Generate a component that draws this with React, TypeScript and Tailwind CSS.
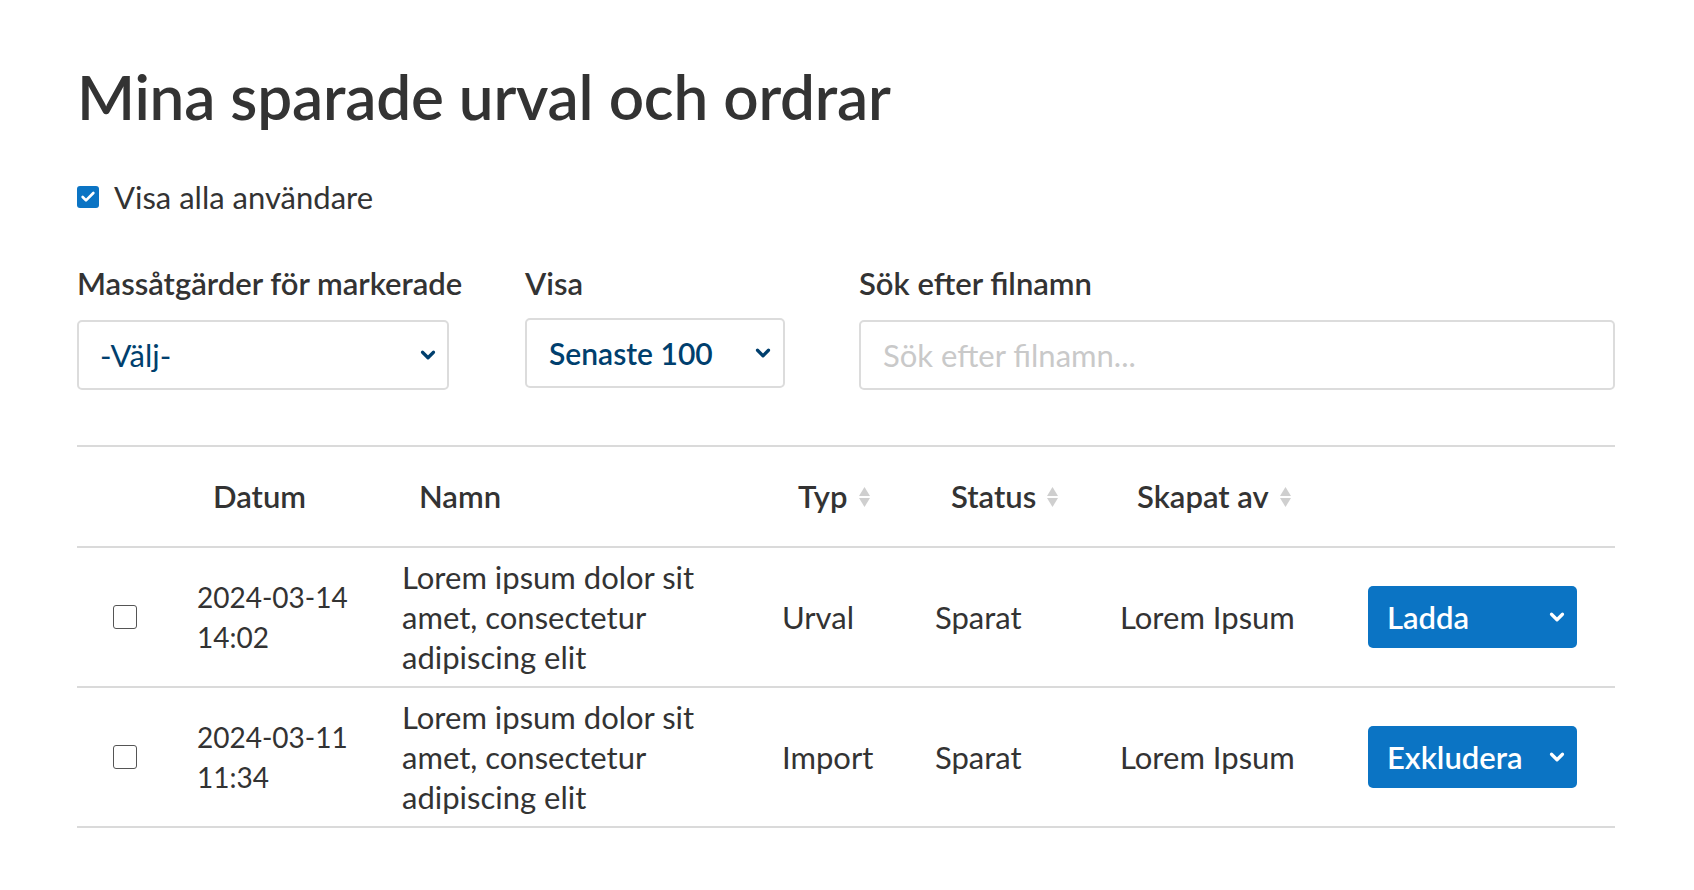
import { ChevronDown, Check } from 'lucide-react';

const rows = [
    { date: '2024-03-14', time: '14:02', type: 'Urval', status: 'Sparat', by: 'Lorem Ipsum', action: 'Ladda' },
    { date: '2024-03-11', time: '11:34', type: 'Import', status: 'Sparat', by: 'Lorem Ipsum', action: 'Exkludera' },
];

const cols = 'grid grid-cols-[120px_205px_380px_153px_185px_248px_1fr]';

function SortIcon() {
    return (
        <svg width="13" height="24" viewBox="0 0 13 24" className="ml-[10px] shrink-0">
            <path d="M6.5 2 L12 11 L1 11 Z" fill="#cfcfcf" />
            <path d="M6.5 22 L12 13 L1 13 Z" fill="#cfcfcf" />
        </svg>
    );
}

export default function App() {
    return (
        <div className="min-h-screen bg-white pl-[77px] pr-[79px] pt-[62px] text-[#333]" style={{ fontFamily: 'Lato, "Noto Sans", sans-serif' }}>
            <h1 className="text-[62px] font-semibold leading-[68px] tracking-[-0.2px]">Mina sparade urval och ordrar</h1>

            {/* visa alla */}
            <label className="mt-[50px] flex items-center gap-[15px]">
                <span className="flex h-[22px] w-[22px] items-center justify-center rounded-[3px] bg-[#0b74c4]">
                    <Check className="h-4 w-4 text-white" strokeWidth={4} />
                </span>
                <span className="text-[31px] leading-[34px]">Visa alla användare</span>
            </label>

            {/* filters */}
            <div className="mt-[52px] flex items-start">
                <div className="w-[372px]">
                    <div className="whitespace-nowrap text-[31px] font-semibold leading-[34px]">Massåtgärder för markerade</div>
                    <div className="mt-[20px] flex h-[70px] items-center justify-between rounded-[5px] border-2 border-[#dcdcdc] pl-[21px] pr-[8px] text-[31px] text-[#003f6e]">
                        <span>-Välj-</span>
                        <ChevronDown className="h-[22px] w-[22px]" strokeWidth={3.5} />
                    </div>
                </div>
                <div className="ml-[76px] w-[260px]">
                    <div className="text-[31px] font-semibold leading-[34px]">Visa</div>
                    <div className="mt-[18px] flex h-[70px] items-center justify-between rounded-[5px] border-2 border-[#dcdcdc] pl-[22px] pr-[9px] text-[30px] font-semibold text-[#003f6e]">
                        <span>Senaste 100</span>
                        <ChevronDown className="h-[22px] w-[22px]" strokeWidth={3.5} />
                    </div>
                </div>
                <div className="ml-[74px] flex-1">
                    <div className="text-[31px] font-semibold leading-[34px]">Sök efter filnamn</div>
                    <input
                        placeholder="Sök efter filnamn..."
                        className="mt-[20px] h-[70px] w-full rounded-[5px] border-2 border-[#dcdcdc] px-[22px] text-[31px] outline-none placeholder:text-[#c9c9c9]"
                    />
                </div>
            </div>

            {/* table */}
            <div className="mt-[55px] border-t-2 border-[#dadada]">
                <div className={`${cols} h-[101px] items-center border-b-2 border-[#dadada] text-[31px] font-semibold`}>
                    <div />
                    <div className="pl-[16px]">Datum</div>
                    <div className="pl-[17px]">Namn</div>
                    <div className="flex items-center pl-[16px]">Typ<SortIcon /></div>
                    <div className="flex items-center pl-[16px]">Status<SortIcon /></div>
                    <div className="flex items-center pl-[17px]">Skapat av<SortIcon /></div>
                    <div />
                </div>
                {rows.map((r) => (
                    <div key={r.date} className={`${cols} items-center border-b-2 border-[#dadada] py-[9px] text-[31px] leading-[40px]`}>
                        <div className="pl-[36px]">
                            <span className="block h-[24px] w-[24px] rounded-[3px] border border-[#555] bg-white" />
                        </div>
                        <div className="text-[28px]">{r.date}<br />{r.time}</div>
                        <div className="w-[330px]">Lorem ipsum dolor sit amet, consectetur adipiscing elit</div>
                        <div>{r.type}</div>
                        <div>{r.status}</div>
                        <div>{r.by}</div>
                        <div>
                            <button className="flex h-[62px] w-[209px] items-center justify-between rounded-[5px] bg-[#0b74c4] pl-[19px] pr-[9px] text-[31px] font-semibold text-white">
                                <span>{r.action}</span>
                                <ChevronDown className="h-[22px] w-[22px]" strokeWidth={3.5} />
                            </button>
                        </div>
                    </div>
                ))}
            </div>
        </div>
    );
}
